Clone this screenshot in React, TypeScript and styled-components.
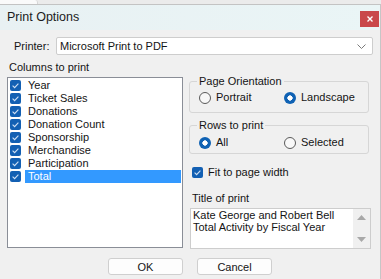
import React, { FC } from 'react'
import styled, { createGlobalStyle, css } from 'styled-components'

const GlobalStyle = createGlobalStyle`
	html, body {
		margin: 0;
		padding: 0;
		background: #f0f0f0;
	}
	body {
		font-family: 'Liberation Sans', Arial, sans-serif;
	}
`

const columns = [
	'Year',
	'Ticket Sales',
	'Donations',
	'Donation Count',
	'Sponsorship',
	'Merchandise',
	'Participation',
	'Total'
]

const CheckMark: FC = () => (
	<svg width="11" height="11" viewBox="0 0 11 11">
		<polyline points="2.6,5.6 4.6,7.6 8.4,3.6" fill="none" stroke="#cfe0f4" strokeWidth="1.1" />
	</svg>
)

const App: FC = () => {
	return (
		<>
			<GlobalStyle />
			<Screen>
				<TopStrip>
					<Tab />
				</TopStrip>
				<Dialog>
					<TitleBar>
						<Title>Print Options</Title>
						<CloseButton>
							<svg width="6" height="6" viewBox="0 0 6 6">
								<path d="M0.5 0.5 L5.5 5.5 M5.5 0.5 L0.5 5.5" stroke="#fff" strokeWidth="1.4" />
							</svg>
						</CloseButton>
					</TitleBar>
					<Body>
						<PrinterRow>
							<PrinterLabel>Printer:</PrinterLabel>
							<Select>
								<span>Microsoft Print to PDF</span>
								<svg width="9" height="5" viewBox="0 0 9 5">
									<polyline points="0.5,0.5 4.5,4.5 8.5,0.5" fill="none" stroke="#7a7a7a" strokeWidth="1" />
								</svg>
							</Select>
						</PrinterRow>
						<Columns>
							<LeftColumn>
								<SectionLabel>Columns to print</SectionLabel>
								<ListBox>
									{columns.map((name) => (
										<ListRow key={name}>
											<CheckBox>
												<CheckMark />
											</CheckBox>
											<ListLabel $selected={name === 'Total'}>{name}</ListLabel>
										</ListRow>
									))}
								</ListBox>
							</LeftColumn>
							<RightColumn>
								<Group $top={20} $padBottom={8}>
									<Legend>Page Orientation</Legend>
									<RadioRow $top={3}>
										<RadioItem>
											<Radio $checked={false} />
											Portrait
										</RadioItem>
										<RadioItem>
											<Radio $checked />
											Landscape
										</RadioItem>
									</RadioRow>
								</Group>
								<Group $top={6} $padBottom={4}>
									<Legend>Rows to print</Legend>
									<RadioRow $top={4}>
										<RadioItem>
											<Radio $checked />
											All
										</RadioItem>
										<RadioItem>
											<Radio $checked={false} />
											Selected
										</RadioItem>
									</RadioRow>
								</Group>
								<FitRow>
									<CheckBox>
										<CheckMark />
									</CheckBox>
									Fit to page width
								</FitRow>
								<TitleLabel>Title of print</TitleLabel>
								<TextBox>
									<TextContent>
										Kate George and Robert Bell
										<br />
										Total Activity by Fiscal Year
									</TextContent>
									<ScrollBar>
										<svg width="9" height="5" viewBox="0 0 9 5">
											<polygon points="0,5 4.5,0 9,5" fill="#a8a8a8" />
										</svg>
										<svg width="9" height="5" viewBox="0 0 9 5">
											<polygon points="0,0 4.5,5 9,0" fill="#a8a8a8" />
										</svg>
									</ScrollBar>
								</TextBox>
							</RightColumn>
						</Columns>
						<ButtonRow>
							<Button>OK</Button>
							<Button>Cancel</Button>
						</ButtonRow>
					</Body>
				</Dialog>
			</Screen>
		</>
	)
}

export default App

const Screen = styled.div`
	width: 381px;
	height: 279px;
	overflow: hidden;
	background: #f0f0f0;
	display: flex;
	flex-direction: column;
	color: #141414;
	font-size: 11px;
`

const TopStrip = styled.div`
	height: 4px;
	flex: none;
	display: flex;
	background: #ebebeb;
`

const Tab = styled.div`
	width: 37px;
	background: #fafafa;
	border-right: 1px solid #d6d6d6;
	border-top-right-radius: 3px;
`

const Dialog = styled.div`
	flex: 1;
	display: flex;
	flex-direction: column;
	border-top: 1px solid #c3c3c3;
	border-right: 1px solid #c6c6c6;
`

const TitleBar = styled.div`
	height: 25px;
	flex: none;
	display: flex;
	align-items: flex-start;
	justify-content: space-between;
	padding-left: 7px;
	background: linear-gradient(90deg, #e8f1f3, #eaf5f6);
`

const Title = styled.div`
	font-size: 12.5px;
	line-height: 25px;
	color: #1c1c1c;
`

const CloseButton = styled.div`
	width: 19px;
	height: 16px;
	margin-top: 6px;
	margin-right: 1px;
	background: #c9484b;
	display: flex;
	align-items: center;
	justify-content: center;
`

const Body = styled.div`
	padding: 7px 0 0 7px;
	display: flex;
	flex-direction: column;
`

const PrinterRow = styled.div`
	display: flex;
	align-items: center;
	height: 18px;
	margin-right: 7px;
`

const PrinterLabel = styled.div`
	width: 49px;
	padding-left: 7px;
	box-sizing: border-box;
`

const Select = styled.div`
	flex: 1;
	height: 18px;
	box-sizing: border-box;
	border: 1px solid #cdcdcd;
	border-radius: 2px;
	background: #fff;
	display: flex;
	align-items: center;
	justify-content: space-between;
	padding: 0 6px 0 3px;
`

const Columns = styled.div`
	display: grid;
	grid-template-columns: 176px 182px;
	column-gap: 6px;
	align-items: start;
`

const LeftColumn = styled.div`
	display: flex;
	flex-direction: column;
`

const SectionLabel = styled.div`
	margin-top: 6px;
	padding-left: 2px;
	line-height: 13px;
`

const ListBox = styled.div`
	margin-top: 3px;
	height: 171px;
	box-sizing: border-box;
	border: 1px solid #8a8e97;
	background: #fff;
	padding-top: 1px;
`

const ListRow = styled.div`
	display: flex;
	align-items: center;
	height: 13px;
	padding-left: 2px;
`

const CheckBox = styled.div`
	width: 11px;
	height: 11px;
	flex: none;
	border-radius: 2px;
	background: #1360b3;
	display: flex;
`

const ListLabel = styled.div<{ $selected: boolean }>`
	flex: 1;
	height: 13px;
	line-height: 13px;
	margin: 0 1px 0 4px;
	padding-left: 3px;
	${(p) =>
		p.$selected &&
		css`
			background: #3399ff;
			color: #fff;
		`}
`

const RightColumn = styled.div`
	display: flex;
	flex-direction: column;
`

const Group = styled.fieldset<{ $top: number; $padBottom: number }>`
	margin: ${(p) => p.$top}px 2px 0 0;
	padding: 0 7px ${(p) => p.$padBottom}px 7px;
	border: 1px solid #d6d6d6;
	border-radius: 3px;
	min-width: 0;
`

const Legend = styled.legend`
	padding: 0 2px;
	line-height: 13px;
	font-size: 11px;
`

const RadioRow = styled.div<{ $top: number }>`
	display: grid;
	grid-template-columns: 85px 1fr;
	margin-top: ${(p) => p.$top}px;
	padding-left: 2px;
	height: 13px;
`

const RadioItem = styled.div`
	display: flex;
	align-items: center;
	gap: 5px;
	line-height: 13px;
`

const Radio = styled.div<{ $checked: boolean }>`
	width: 12px;
	height: 12px;
	box-sizing: border-box;
	border-radius: 50%;
	flex: none;
	${(p) =>
		p.$checked
			? css`
					background: radial-gradient(circle, #fff 0 2.4px, #0f62b4 2.9px);
			  `
			: css`
					border: 1px solid #5a5a5a;
					background: #f8f8f8;
			  `}
`

const FitRow = styled.div`
	display: flex;
	align-items: center;
	gap: 5px;
	height: 13px;
	margin: 11.5px 0 0 3px;
	line-height: 13px;
`

const TitleLabel = styled.div`
	margin-top: 13.5px;
	padding-left: 3px;
	line-height: 13px;
`

const TextBox = styled.div`
	margin: 3px 0 0 1px;
	height: 41px;
	box-sizing: border-box;
	border: 1px solid #cdcdcd;
	background: #fff;
	display: flex;
`

const TextContent = styled.div`
	flex: 1;
	padding: 1px 0 0 2px;
	line-height: 11.5px;
`

const ScrollBar = styled.div`
	width: 17px;
	background: #f0f0f0;
	display: flex;
	flex-direction: column;
	align-items: center;
	justify-content: space-between;
	padding: 6px 0 6px;
	box-sizing: border-box;
`

const ButtonRow = styled.div`
	display: flex;
	justify-content: center;
	gap: 14px;
	margin: 9px 7px 0 0;
`

const Button = styled.div`
	width: 75px;
	height: 17px;
	box-sizing: border-box;
	border: 1px solid #cfcfcf;
	border-radius: 3px;
	background: #fdfdfd;
	display: flex;
	align-items: center;
	justify-content: center;
`
